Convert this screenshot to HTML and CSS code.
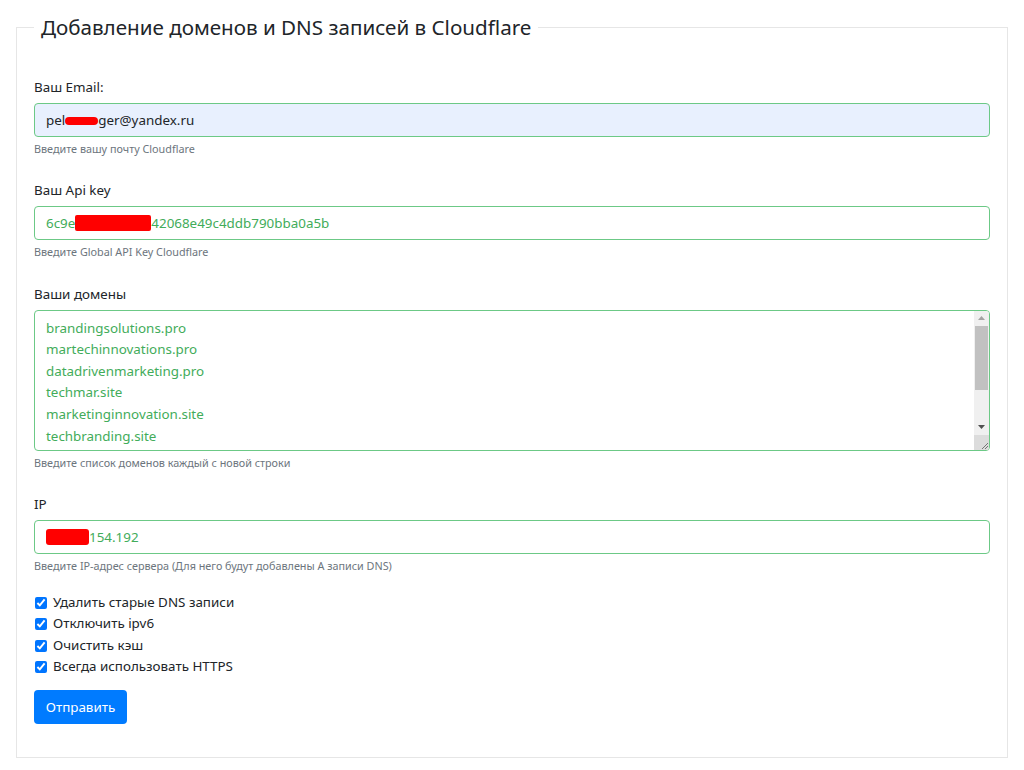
FILE: index.html
```html
<!DOCTYPE html>
<html lang="ru">
<head>
<meta charset="utf-8">
<title>Cloudflare</title>
<link rel="stylesheet" href="styles.css">
</head>
<body>
<div class="page">
  <fieldset class="box">
    <legend class="box-title">Добавление доменов и DNS записей в Cloudflare</legend>

    <div class="group">
      <div class="label">Ваш Email:</div>
      <div class="field field-autofill">pel<span class="redact redact-email"></span>ger@yandex.ru</div>
      <div class="help">Введите вашу почту Cloudflare</div>
    </div>

    <div class="group">
      <div class="label">Ваш Api key</div>
      <div class="field field-valid">6c9e<span class="redact redact-key"></span>42068e49c4ddb790bba0a5b</div>
      <div class="help">Введите Global API Key Cloudflare</div>
    </div>

    <div class="group">
      <div class="label">Ваши домены</div>
      <div class="area">
        <div class="area-text">
          <div>brandingsolutions.pro</div>
          <div>martechinnovations.pro</div>
          <div>datadrivenmarketing.pro</div>
          <div>techmar.site</div>
          <div>marketinginnovation.site</div>
          <div>techbranding.site</div>
        </div>
        <div class="scrollbar">
          <div class="sb-btn"><svg width="7" height="4" viewBox="0 0 7 4"><path d="M0 4L3.5 0L7 4Z" fill="#a3a3a3"/></svg></div>
          <div class="sb-track">
            <div class="sb-thumb"></div>
          </div>
          <div class="sb-btn"><svg width="7" height="4" viewBox="0 0 7 4"><path d="M0 0L3.5 4L7 0Z" fill="#505050"/></svg></div>
          <div class="sb-corner"><svg width="8" height="8" viewBox="0 0 8 8"><path d="M7 1L1 7M7 4L4 7" stroke="#777" stroke-width="1"/></svg></div>
        </div>
      </div>
      <div class="help">Введите список доменов каждый с новой строки</div>
    </div>

    <div class="group group-last">
      <div class="label">IP</div>
      <div class="field field-valid"><span class="redact redact-ip"></span>154.192</div>
      <div class="help">Введите IP-адрес сервера (Для него будут добавлены A записи DNS)</div>
    </div>

    <div class="checks">
      <label class="check"><input type="checkbox" checked> Удалить старые DNS записи</label>
      <label class="check"><input type="checkbox" checked> Отключить ipv6</label>
      <label class="check"><input type="checkbox" checked> Очистить кэш</label>
      <label class="check"><input type="checkbox" checked> Всегда использовать HTTPS</label>
    </div>

    <button class="btn" type="button">Отправить</button>
  </fieldset>
</div>
</body>
</html>
```

FILE: styles.css
```css
* { box-sizing: border-box; }
html, body { margin: 0; padding: 0; background: #fff; }
body {
  font-family: "Noto Sans", "Open Sans", Arial, sans-serif;
  color: #212529;
  font-size: 13.4px;
}
.page {
  padding: 13px 16px 0 16px;
}
.box {
  margin: 0;
  border: 1px solid #e6e6e6;
  padding: 34px 17px 33px 17px;
  min-width: 0;
}
.box-title {
  padding: 0 7px;
  font-size: 20.6px;
  line-height: 29px;
  color: #212529;
  font-weight: 400;
}
.group {
  margin-bottom: 21.3px;
}
.group-last {
  margin-bottom: 17px;
}
.label {
  font-size: 13.4px;
  line-height: 22px;
  color: #212529;
  margin-bottom: 5px;
}
.field {
  height: 34px;
  border: 1px solid #6cc986;
  border-radius: 4px;
  padding: 0 11px;
  font-size: 13.4px;
  line-height: 32px;
  display: flex;
  align-items: center;
  white-space: nowrap;
}
.field-autofill {
  background: #e8f0fe;
  color: #212529;
}
.field-valid {
  color: #42ac5a;
  background: #fff;
}
.redact {
  display: inline-block;
  background: #ff0000;
}
.redact-email { width: 33px; height: 8px; border-radius: 4px; margin-top: 2px; }
.redact-key { width: 76px; height: 16px; border-radius: 2px; }
.redact-ip { width: 43px; height: 16px; border-radius: 3px; }
.help {
  font-size: 10.8px;
  line-height: 18px;
  color: #6c757d;
  margin-top: 3px;
}
.area {
  height: 141px;
  border: 1px solid #6cc986;
  border-radius: 4px;
  display: flex;
  overflow: hidden;
}
.area-text {
  flex: 1;
  padding: 7px 11px 3px;
  color: #42ac5a;
  font-size: 13.4px;
  line-height: 21.6px;
}
.scrollbar {
  width: 15px;
  background: #f0f0f0;
  display: flex;
  flex-direction: column;
}
.sb-btn {
  height: 15px;
  display: flex;
  align-items: center;
  justify-content: center;
}
.sb-track {
  flex: 1;
}
.sb-thumb {
  margin: 0 1px;
  height: 64px;
  background: #c1c1c1;
}
.sb-corner {
  height: 15px;
  background: #dcdcdc;
  display: flex;
  align-items: flex-end;
  justify-content: flex-end;
}
.checks {
  display: flex;
  flex-direction: column;
}
.check {
  display: flex;
  align-items: center;
  font-size: 13.4px;
  line-height: 21.5px;
  color: #212529;
}
.check input {
  margin: 0 6px 0 1px;
  width: 12px;
  height: 12px;
  accent-color: #0075ff;
}
.btn {
  margin-top: 12px;
  width: 93px;
  height: 34px;
  background: #007bff;
  color: #fff;
  border: 0;
  border-radius: 4px;
  font-family: inherit;
  font-size: 13.4px;
  padding: 0;
}
```
